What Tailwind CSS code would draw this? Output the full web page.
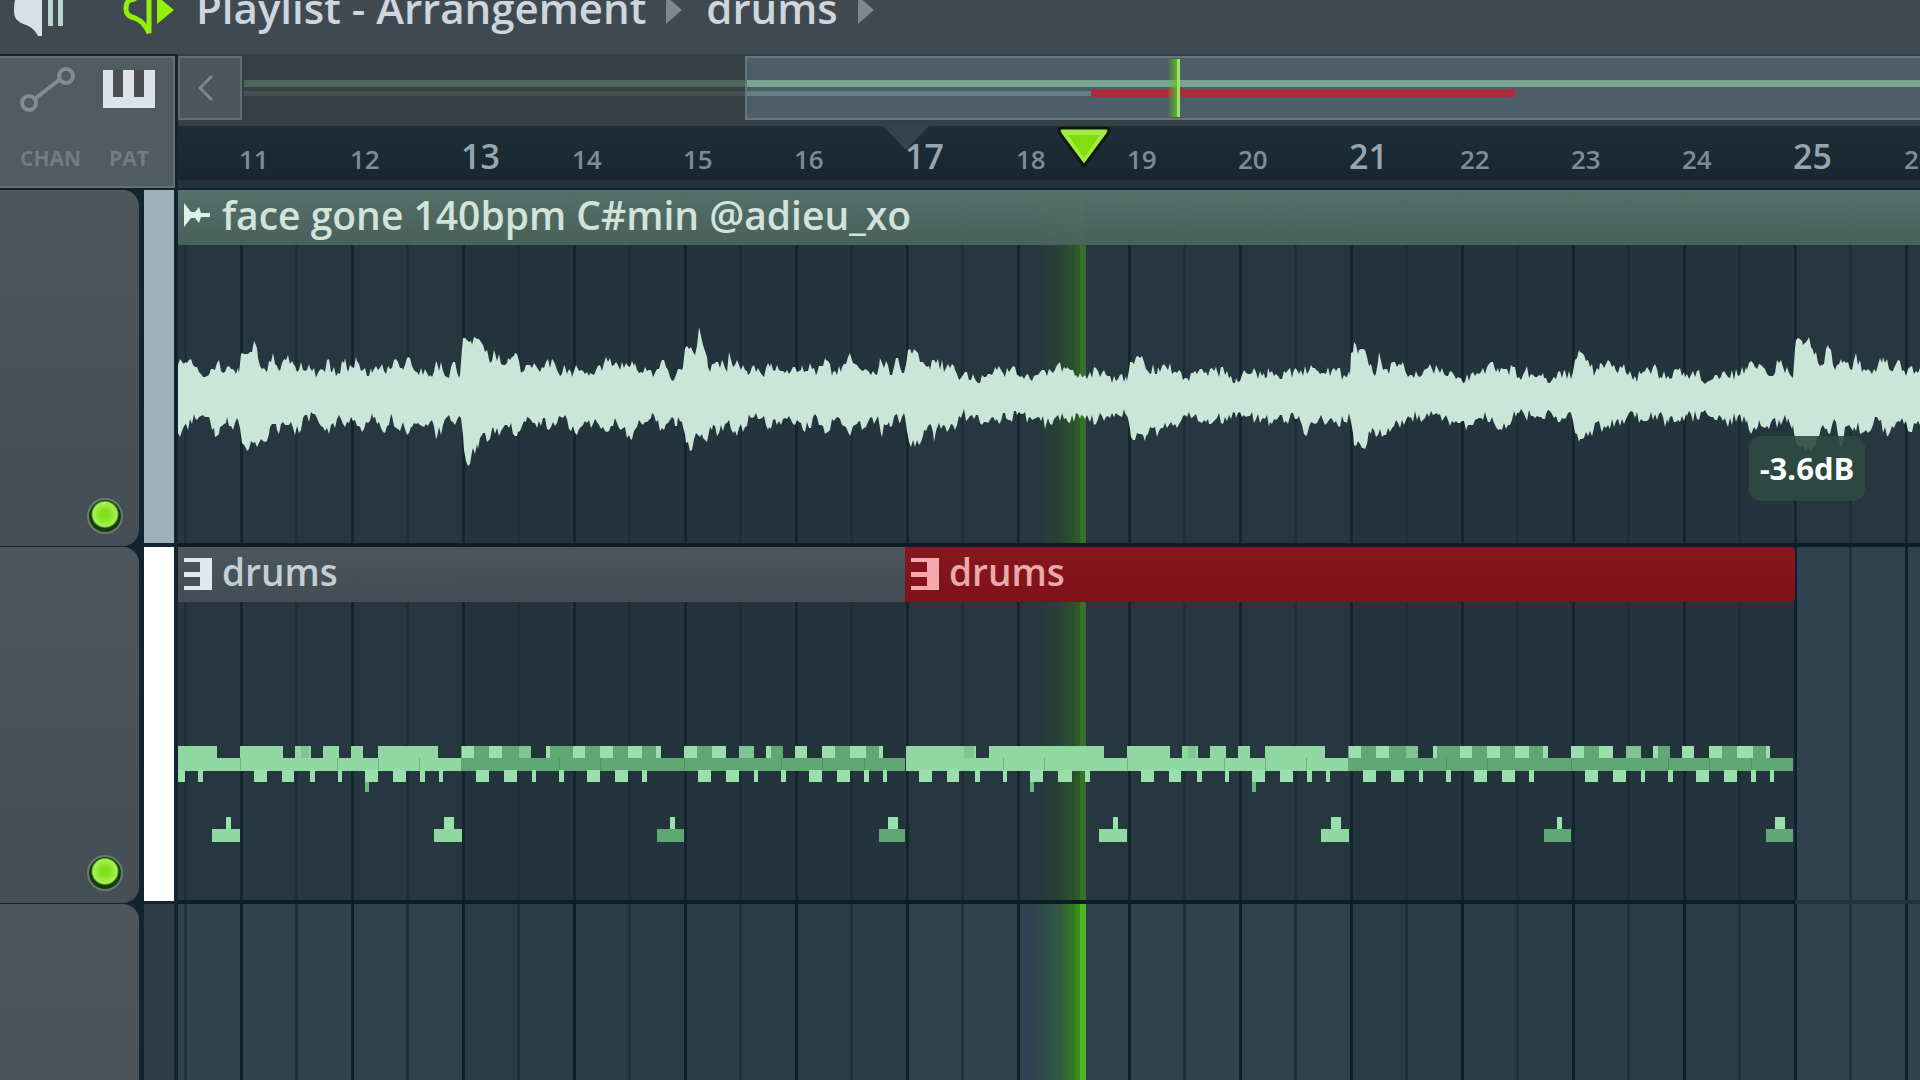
<!DOCTYPE html>
<html lang="en">
<head>
    <meta charset="UTF-8">
    <meta name="viewport" content="width=device-width, initial-scale=1.0">
    <title>Playlist - Arrangement</title>
    <script src="https://cdn.jsdelivr.net/npm/@tailwindcss/browser@4"></script>
</head>
<body class="bg-[#14242e] font-['Open_Sans','Noto_Sans',sans-serif] text-[#cdd6dc] overflow-hidden">

    <div class="flex flex-col h-screen">

        <!-- Title bar -->
        <header class="flex shrink-0 items-end h-[54px] pb-4 pl-3 overflow-hidden bg-[#40494f]">
            <button aria-label="Speaker" class="w-14">
                <svg class="w-14 h-11" viewBox="0 0 56 44">
                    <path fill="#d8e0e4" d="M6 0h24v42h-4c-3-6-7-9-12-11C5 28 2 24 2 17 2 9 3 4 6 0z"/>
                    <path fill="#b9d6cc" d="M36 0h5v32h-5zM46 0h5v32h-5z"/>
                </svg>
            </button>
            <button aria-label="Preview" class="ml-[52px] w-14">
                <svg class="w-14 h-11" viewBox="0 0 56 44">
                    <path fill="none" stroke="#93f00a" stroke-width="5" d="M29 0v39c-4-9-8-12-14-15C8 22 6 20 6 15 6 8 8 6 14 5l8-5"/>
                    <path fill="#93f00a" d="M37 2l17 14-17 14z"/>
                </svg>
            </button>
            <nav aria-label="Breadcrumb" class="flex items-center ml-5 h-[60px] text-[42px] leading-[60px] font-semibold whitespace-nowrap">
                <a href="#">Playlist - Arrangement</a>
                <svg class="ml-5 mt-1 w-4 h-7" viewBox="0 0 16 28"><path fill="#7d888d" d="M0 0l16 14L0 28z"/></svg>
                <a href="#" class="ml-6">drums</a>
                <svg class="ml-5 mt-1 w-4 h-7" viewBox="0 0 16 28"><path fill="#7d888d" d="M0 0l16 14L0 28z"/></svg>
            </nav>
        </header>

        <!-- Scroller and ruler -->
        <div class="flex shrink-0 h-[136px] bg-[#14242e]">
            <div class="shrink-0 w-[175px] h-[132px] mt-0.5 pl-5 pr-[18px] flex flex-col justify-between border-2 border-l-0 border-[#65716f] bg-[#515b62]">
                <div class="flex items-start justify-between pt-2">
                    <button aria-label="Automation">
                        <svg class="w-14 h-12" viewBox="0 0 56 48" fill="none" stroke="#838c90" stroke-width="4">
                            <circle cx="9" cy="37" r="7"/><circle cx="46" cy="10" r="7"/><path d="M16 32l23-18"/>
                        </svg>
                    </button>
                    <button aria-label="Patterns" class="mt-1">
                        <svg class="w-[52px] h-[38px]" viewBox="0 0 52 38">
                            <path fill="#dde4e8" d="M0 0h52v38H0z"/>
                            <path fill="#4b4f52" d="M10 0h10v27H10zM31 0h10v27H31z"/>
                        </svg>
                    </button>
                </div>
                <div class="flex gap-7 pb-3.5 text-[21px] leading-7 font-bold text-[#727d82]">
                    <button>CHAN</button>
                    <button>PAT</button>
                </div>
            </div>

            <div class="flex-1 min-w-0 ml-[3px] flex flex-col">
                <div class="flex h-[72px] bg-[#363f43]">
                    <button aria-label="Scroll left" class="flex items-center justify-center w-16 h-16 mt-0.5 border-2 border-[#626d70] bg-[#4b565b]">
                        <svg class="w-4 h-7 -ml-2" viewBox="0 0 16 28" fill="none" stroke="#7d888b" stroke-width="3"><path d="M14 2L2 14l12 12"/></svg>
                    </button>
                    <!-- Song overview -->
                    <div class="relative flex-1 ml-0.5 overflow-hidden">
                        <div class="absolute inset-x-0 top-[26px] h-[7px] bg-[#4d675d]"></div>
                        <div class="absolute left-0 top-[37px] w-[845px] h-[5px] bg-[#484f51]"></div>
                        <div class="absolute left-[501px] -right-1 top-0.5 h-16 border-2 border-[#66757b] bg-[#4c5e66]">
                            <div class="absolute inset-x-0 top-[22px] h-[7px] bg-[#7ba496]"></div>
                            <div class="absolute left-0 top-[33px] w-[345px] h-[5px] bg-[#687c88]"></div>
                            <div class="absolute left-[344px] top-[31px] w-[424px] h-2 bg-[#ab2c3b]"></div>
                            <div class="absolute left-[420px] top-px w-3 h-[58px] bg-gradient-to-r from-[#5bb51e]/0 to-[#62c023]"></div>
                            <div class="absolute left-[430px] top-px w-[3px] h-[58px] bg-[#9be56c]"></div>
                        </div>
                    </div>
                </div>

                <!-- Bar numbers -->
                <div class="relative h-[62px] border-b-8 border-[#22313a] bg-gradient-to-b from-[#1e2e36] to-[#192630] overflow-hidden">
                    <svg class="absolute left-[705px] top-0 w-12 h-6" viewBox="0 0 48 24"><path fill="#35444c" d="M0 0h46L23 24z"/></svg>
                    <ol id="ruler" class="relative flex items-baseline pl-[61px] pt-[5px]"></ol>
                    <svg class="absolute left-[877px] top-0 w-[58px] h-11" viewBox="0 0 58 44">
                        <path fill="#a4ec42" stroke="#0d1a10" stroke-width="3" stroke-linejoin="round" d="M4 4q0-2 3-2h44q3 0 3 2 0 2-2 5L29 40 6 9Q4 6 4 4z"/>
                        <path fill="#84dd0c" d="M13 9h32L29 32z"/>
                    </svg>
                </div>
            </div>
        </div>

        <!-- Tracks -->
        <div class="flex flex-1 min-h-0 overflow-hidden">

            <!-- Track heads -->
            <div class="shrink-0 w-[178px]">
                <div class="flex h-[357px]">
                    <div class="flex items-end justify-end w-[139px] h-[356px] pb-3 pr-4 rounded-r-2xl bg-gradient-to-b from-[#4d565b] to-[#454e54]">
                        <input type="checkbox" checked aria-label="Track 1 on" class="appearance-none w-9 h-9 rounded-full border-2 border-[#6b7a70] bg-[radial-gradient(circle_at_50%_45%,#7fe01c_0_4px,#a8f455_12px,#123d0c_14px)]">
                    </div>
                    <div class="ml-[5px] w-[30px] h-[353px] bg-[#9db1bc]"></div>
                </div>
                <div class="flex h-[357px]">
                    <div class="flex items-end justify-end w-[139px] h-[356px] pb-3 pr-4 rounded-r-2xl bg-gradient-to-b from-[#4d565b] to-[#454e54]">
                        <input type="checkbox" checked aria-label="Track 2 on" class="appearance-none w-9 h-9 rounded-full border-2 border-[#6b7a70] bg-[radial-gradient(circle_at_50%_45%,#7fe01c_0_4px,#a8f455_12px,#123d0c_14px)]">
                    </div>
                    <div class="ml-[5px] w-[30px] h-[354px] bg-white"></div>
                </div>
                <div class="flex h-[357px]">
                    <div class="w-[139px] h-[356px] rounded-r-2xl bg-gradient-to-b from-[#4d565b] to-[#454e54]"></div>
                    <div class="ml-[5px] w-[30px] h-[354px] bg-[#303d46]"></div>
                </div>
            </div>

            <!-- Arrangement -->
            <main class="relative flex-1 min-w-0 overflow-hidden bg-[#2e434f]">
                <div class="absolute inset-0 bg-[linear-gradient(90deg,#293d48_0_444px,transparent_444px)] bg-[length:888px_100%] bg-[position:285px_0]"></div>
                <div class="absolute inset-0 bg-[linear-gradient(90deg,#0c1f2a_0_3px,transparent_3px_55px,#1e323d_55px_58px,transparent_58px)] bg-[length:111px_100%] bg-[position:62px_0]"></div>
                <div class="absolute inset-y-0 left-[856px] w-[52px] bg-gradient-to-r from-[#3f9a12]/0 via-[#3f9a12]/25 to-[#3fa00f]"></div>
                <div class="absolute inset-y-0 left-[902px] w-1.5 bg-[#4bb81f]"></div>

                <div class="relative h-[357px] border-b-4 border-[#0d1c27]">
                    <section class="h-full bg-[#1e2b2f]/50">
                        <h2 class="relative flex items-center h-[55px] pb-1.5 pl-1.5 gap-3 bg-gradient-to-b from-[#56736a]/95 to-[#4a645c]/95 text-[39px] leading-[48px] font-semibold text-[#d3e3dc] whitespace-nowrap">
                            <svg class="w-[26px] h-6" viewBox="0 0 26 24" fill="#dbf3e8"><path d="M0 0l7 9h4l4-5 2 6h9v4h-9l-2 6-4-5H7l-7 9z"/></svg>
                            face gone 140bpm C#min @adieu_xo
                        </h2>
                    </section>
                    <svg class="absolute left-0 top-0 w-[1742px] h-[353px]" viewBox="0 0 1742 353"><path id="wave" fill="#c9e6d9"/></svg>
                    <output class="absolute left-[1571px] top-[246px] w-[116px] h-[65px] rounded-xl bg-[#2f4a43]/90 text-center text-[31px] leading-[65px] font-bold text-white">-3.6dB</output>
                </div>

                <div class="relative flex h-[357px]">
                    <section class="relative w-[727px] border-b-4 border-[#0d1c27] bg-[#1e2b2f]/50 overflow-hidden">
                        <h2 class="flex items-center h-[55px] pb-1.5 pl-1.5 gap-2.5 bg-gradient-to-b from-[#4e595e]/95 to-[#434e55]/95 text-[37px] leading-[48px] font-semibold text-[#c3ced5]">
                            <svg class="mt-1 w-7 h-8" viewBox="0 0 28 32"><path fill="#dfe9ee" d="M0 0h28v32H0v-4h16v-9H0v-5h16V4H0z"/></svg>
                            drums
                        </h2>
                        <svg class="absolute -left-[159px] top-0 w-[888px] h-[353px]" viewBox="0 0 888 353"><use href="#drums"/></svg>
                    </section>
                    <section class="relative w-[890px] border-b-4 border-[#0d1c27] bg-[#1e2b2f]/50 overflow-hidden">
                        <h2 class="flex items-center h-[55px] pb-1.5 pl-1.5 gap-2.5 rounded-r-sm bg-gradient-to-b from-[#87171f] to-[#7f111a] text-[37px] leading-[48px] font-semibold text-[#e9aaad]">
                            <svg class="mt-1 w-7 h-8" viewBox="0 0 28 32"><path fill="#f5a9ad" d="M0 0h28v32H0v-4h16v-9H0v-5h16V4H0z"/></svg>
                            drums
                        </h2>
                        <svg class="absolute left-px top-0 w-[888px] h-[353px]" viewBox="0 0 888 353"><g id="drums"></g></svg>
                    </section>
                    <div class="flex-1 border-b-4 border-[#20333e]"></div>
                </div>
            </main>
        </div>
    </div>

    <script>
        // bar numbers, every fourth one is bigger
        const ruler = document.getElementById('ruler');
        for (let bar = 11; bar <= 26; bar++) {
            const li = document.createElement('li');
            li.textContent = bar;
            li.className = bar % 4 === 1
                ? 'shrink-0 w-[111px] text-[34px] leading-[50px] font-semibold text-[#95a6b0]'
                : 'shrink-0 w-[111px] text-[26px] leading-[50px] font-semibold text-[#7c8d96]';
            ruler.appendChild(li);
        }

        // waveform peaks: x,y pairs
        const upper = '0,175 7,172 17,177 27,187 39,173 47,182 54,179 61,183 64,163 72,162 77,153 80,168 89,182 95,163 100,179 110,165 117,176 132,178 139,185 147,182 149,170 154,182 160,183 167,168 170,182 179,171 185,180 194,183 202,178 212,179 220,172 225,180 230,167 239,182 252,185 259,173 271,188 275,172 282,185 285,148 294,155 299,149 305,155 312,173 317,163 325,175 330,168 337,163 344,182 352,175 362,182 375,170 380,182 387,177 394,187 399,177 412,183 430,172 440,175 457,173 465,183 477,183 484,170 490,180 492,187 505,177 507,158 513,157 517,165 521,137 525,155 530,177 545,172 549,182 551,162 555,177 559,170 570,185 576,175 584,185 593,173 603,181 624,175 639,183 648,170 655,182 664,177 673,167 683,180 699,185 702,168 714,185 718,168 726,183 730,160 736,159 743,172 752,180 756,170 768,178 777,180 783,188 787,182 796,187 808,187 817,177 825,183 833,179 840,185 856,186 867,181 878,177 889,177 898,185 905,187 912,182 924,183 938,191 942,185 949,191 952,172 958,167 966,172 971,183 980,177 988,177 999,183 1009,188 1020,182 1039,181 1058,188 1074,183 1087,188 1090,178 1092,183 1100,186 1115,183 1123,180 1138,180 1154,180 1169,187 1172,185 1173,163 1176,152 1181,160 1189,167 1195,183 1198,183 1201,162 1205,180 1223,175 1228,183 1236,188 1246,180 1260,179 1268,186 1283,188 1299,183 1316,176 1321,183 1337,177 1339,188 1347,181 1366,188 1378,189 1387,181 1393,189 1397,170 1402,162 1410,170 1417,183 1422,173 1434,177 1444,178 1455,190 1475,177 1482,187 1500,180 1507,187 1515,181 1531,191 1544,183 1550,187 1569,180 1575,173 1591,186 1601,173 1615,188 1618,150 1625,155 1631,147 1636,165 1644,175 1651,158 1657,180 1664,173 1674,180 1678,163 1684,182 1698,182 1705,167 1716,178 1720,170 1726,180 1742,178';
        const lower = '0,243 17,228 27,227 32,230 37,247 42,237 49,227 55,240 60,230 64,253 69,261 77,252 87,252 92,237 99,240 109,235 121,243 125,228 139,228 149,238 157,238 161,225 167,237 173,227 182,237 195,228 205,242 214,226 222,241 225,232 229,245 234,237 252,232 259,247 265,235 271,225 277,235 283,228 286,260 290,276 295,258 300,259 305,243 312,249 315,237 321,246 329,235 340,242 349,227 359,238 365,228 371,240 385,228 399,245 405,235 419,232 427,241 437,228 445,238 454,249 459,237 467,232 474,223 484,238 490,233 492,230 497,236 500,227 505,237 508,253 512,261 518,243 525,248 530,247 535,235 541,243 549,233 555,243 567,237 572,227 584,228 591,237 607,228 625,240 639,227 648,243 658,228 668,237 673,243 680,232 686,238 694,227 701,232 704,247 707,235 712,237 717,225 722,233 727,227 731,252 737,257 743,252 746,240 753,235 756,252 759,238 779,235 784,225 794,225 802,233 817,231 828,228 839,225 854,230 861,227 868,235 880,225 890,232 903,225 912,232 924,226 936,227 947,223 950,228 953,247 968,246 975,238 979,247 983,238 995,236 1005,226 1016,226 1031,234 1039,228 1058,228 1066,225 1085,228 1092,232 1100,228 1111,230 1115,223 1122,230 1129,245 1133,232 1154,229 1169,233 1171,223 1176,255 1185,258 1194,238 1200,245 1212,242 1220,233 1233,227 1247,228 1260,225 1274,231 1291,235 1308,226 1318,237 1330,235 1339,223 1357,228 1368,224 1384,228 1393,223 1397,243 1402,249 1415,242 1419,232 1424,242 1430,235 1446,234 1451,223 1469,231 1477,224 1490,233 1509,226 1531,226 1548,232 1560,226 1569,230 1574,242 1581,230 1589,236 1610,228 1615,235 1619,255 1628,262 1637,257 1643,238 1650,243 1658,232 1663,257 1667,237 1676,237 1693,240 1699,227 1710,246 1718,233 1724,228 1730,241 1742,235';

        // fill the gaps between two peaks with small ripples
        function ripple(list, dir) {
            const pts = list.split(' ').map(p => p.split(',').map(Number));
            const out = [];
            pts.forEach(([x, y], i) => {
                out.push([x, y]);
                const next = pts[i + 1];
                if (!next) return;
                for (let px = x + 2; px < next[0]; px += 2) {
                    const base = y + (next[1] - y) * (px - x) / (next[0] - x);
                    const noise = Math.abs(Math.sin(px * 12.9898) * 43758.5453) % 1;
                    out.push([px, Math.round(base + dir * (noise * 12 - 6))]);
                }
            });
            return out;
        }
        const outline = ripple(upper, 1).concat(ripple(lower, -1).reverse());
        document.getElementById('wave').setAttribute('d', 'M' + outline.map(p => p.join(' ')).join('L') + 'z');

        // drum notes: [x, width] per row
        const light = '#8fd8a2', green = '#5fa874', pale = '#9adfac';
        const rows = [
            [light, 199, 13, [[0,70],[83,114],[221,43],[276,16],[304,16],[332,12],[359,60]]],
            [light, 199, 13, [[197,1]]],
            [green, 199, 13, [[442,70],[527,115],[665,42],[747,17],[803,61]]],
            [pale, 199, 13, [[443,12],[470,13],[527,4],[554,12],[581,13],[609,14],[637,5],[665,13],[693,14],[747,5],[776,12],[803,13],[831,16],[860,4]]],
            ['#7fc592', 199, 13, [[58,10],[282,8],[500,12],[720,15]]],
            [light, 211, 13, [[0,442]]],
            [green, 211, 13, [[442,445]]],
            [pale, 223, 12, [[13,13],[41,12],[69,5],[97,4],[124,13],[152,13],[179,5],[235,13],[263,12],[291,5],[319,4],[346,13],[374,13],[401,5],[420,4],[457,13],[485,13],[513,4],[540,5],[568,13],[596,13],[623,5],[679,13],[707,13],[735,4],[762,5],[790,13],[818,13],[845,5],[864,4]]],
            [pale, 223, 12, [[161,5]]],
            ['#6db583', 235, 10, [[124,4],[346,4]]],
            [pale, 270, 13, [[207,5],[425,10],[651,5],[869,10]]],
            [light, 282, 13, [[193,28],[415,28]]],
            [green, 282, 13, [[638,27],[860,27]]],
            ['#6cb381', 211, 12, [[97,1],[138,1],[221,1],[318,1],[359,1],[400,1]]],
            ['#4c9362', 211, 12, [[540,1],[581,1],[665,1],[762,1],[803,1],[845,1]]]
        ];
        document.getElementById('drums').innerHTML = rows.map(([fill, y, h, notes]) =>
            notes.map(([x, w]) => `<rect x="${x}" y="${y}" width="${w}" height="${h}" fill="${fill}"/>`).join('')).join('');
    </script>
</body>
</html>
